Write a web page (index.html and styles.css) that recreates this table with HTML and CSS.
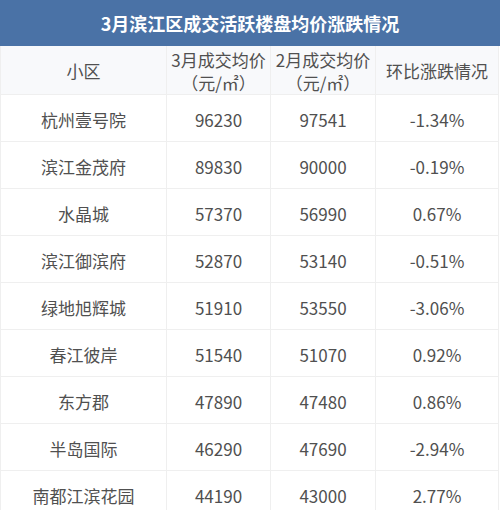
FILE: index.html
```html
<!DOCTYPE html>
<html lang="zh">
<head>
<meta charset="utf-8">
<link rel="stylesheet" href="styles.css">
</head>
<body>
<div class="title">3月滨江区成交活跃楼盘均价涨跌情况</div>
<table class="grid">
  <colgroup><col class="c1"><col class="c2"><col class="c3"><col class="c4"></colgroup>
  <thead>
    <tr><th>小区</th><th>3月成交均价<br>（元/㎡）</th><th>2月成交均价<br>（元/㎡）</th><th>环比涨跌情况</th></tr>
  </thead>
  <tbody>
    <tr><td>杭州壹号院</td><td>96230</td><td>97541</td><td>-1.34%</td></tr>
    <tr><td>滨江金茂府</td><td>89830</td><td>90000</td><td>-0.19%</td></tr>
    <tr><td>水晶城</td><td>57370</td><td>56990</td><td>0.67%</td></tr>
    <tr><td>滨江御滨府</td><td>52870</td><td>53140</td><td>-0.51%</td></tr>
    <tr><td>绿地旭辉城</td><td>51910</td><td>53550</td><td>-3.06%</td></tr>
    <tr><td>春江彼岸</td><td>51540</td><td>51070</td><td>0.92%</td></tr>
    <tr><td>东方郡</td><td>47890</td><td>47480</td><td>0.86%</td></tr>
    <tr><td>半岛国际</td><td>46290</td><td>47690</td><td>-2.94%</td></tr>
    <tr><td>南都江滨花园</td><td>44190</td><td>43000</td><td>2.77%</td></tr>
  </tbody>
</table>
</body>
</html>
```
FILE: styles.css
```css
html, body {
  margin: 0;
  padding: 0;
  background: #ffffff;
}
body {
  width: 500px;
  font-family: "Noto Sans CJK SC", "Noto Sans", sans-serif;
  color: #505050;
}
.title {
  height: 46px;
  line-height: 46px;
  background: #4a72a6;
  color: #ffffff;
  font-size: 18px;
  font-weight: 700;
  text-align: center;
}
.grid {
  width: 498px;
  border-collapse: collapse;
  table-layout: fixed;
  font-size: 17px;
}
.c1 { width: 166px; }
.c2 { width: 104px; }
.c3 { width: 105px; }
.c4 { width: 123px; }
.grid th, .grid td {
  border: 1px solid #efefef;
  text-align: center;
  padding: 0;
  font-weight: 400;
}
.grid th {
  height: 47px;
  line-height: 23px;
  background: #f8f9fb;
  border-top: none;
  padding-top: 1px;
}
.grid td {
  height: 44px;
  padding-top: 2px;
}
```
